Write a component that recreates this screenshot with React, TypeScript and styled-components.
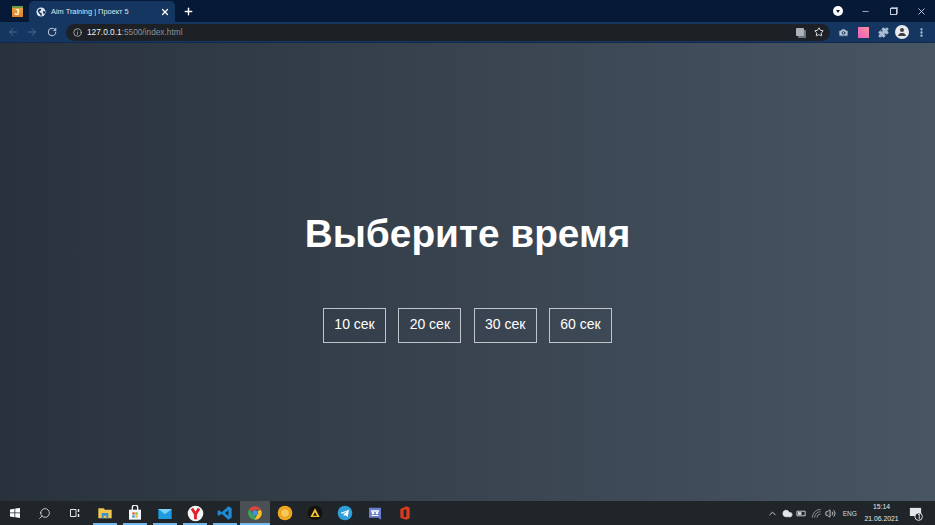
import { ReactNode } from 'react';
import styled, { createGlobalStyle } from 'styled-components';
import {
  ArrowLeft,
  ArrowRight,
  RotateCw,
  Info,
  Star,
  Camera,
  Puzzle,
  X,
  Plus,
  Minus,
  EllipsisVertical,
  ChevronUp,
  Cloud,
  Volume2,
  Search,
} from 'lucide-react';

const GlobalStyle = createGlobalStyle`
  html, body {
    margin: 0;
    padding: 0;
    overflow: hidden;
    background: #29323c;
  }
`;

const Screen = styled.div`
  width: 935px;
  height: 525px;
  display: flex;
  flex-direction: column;
  font-family: 'Liberation Sans', Arial, sans-serif;
  overflow: hidden;
`;

const TabStrip = styled.div`
  height: 22px;
  flex: none;
  display: flex;
  align-items: flex-end;
  background: #061a38;
  color: #fff;
`;

const AppBadge = styled.div`
  width: 29px;
  height: 21px;
  flex: none;
  display: flex;
  align-items: center;
  justify-content: center;
`;

const BadgeLetter = styled.div`
  width: 11px;
  height: 11px;
  margin-left: 5px;
  background: linear-gradient(180deg, #6e9a45 0, #6e9a45 18%, #e8a23a 18%, #dc7f2e 100%);
  color: #fff;
  font-size: 9px;
  font-weight: 700;
  line-height: 12px;
  text-align: center;
`;

const Tab = styled.div`
  width: 146px;
  height: 21px;
  flex: none;
  display: flex;
  align-items: center;
  gap: 5px;
  padding: 0 5px 0 7px;
  box-sizing: border-box;
  background: #153660;
  border-radius: 5px 5px 0 0;
  font-size: 7.4px;
  color: #dfe6ef;
`;

const TabTitle = styled.span`
  flex: 1;
  white-space: nowrap;
`;

const NewTab = styled.div`
  width: 26px;
  height: 21px;
  flex: none;
  display: flex;
  align-items: center;
  justify-content: center;
`;

const StripSpacer = styled.div`
  flex: 1;
`;

const ProfileDot = styled.div`
  width: 10px;
  height: 10px;
  margin: 0 8px 6px 0;
  border-radius: 50%;
  background: #fff;
  display: flex;
  align-items: center;
  justify-content: center;
  &::after {
    content: '';
    border-left: 2.5px solid transparent;
    border-right: 2.5px solid transparent;
    border-top: 3px solid #061a38;
  }
`;

const WindowButton = styled.div`
  width: 28px;
  height: 20px;
  margin-bottom: 1px;
  display: flex;
  align-items: center;
  justify-content: center;
  color: #c8d0da;
`;

const RestoreIcon = styled.div`
  width: 5px;
  height: 5px;
  border: 1px solid #c8d0da;
  box-shadow: 1px -1px 0 0 #8a94a3;
`;

const Toolbar = styled.div`
  height: 21px;
  flex: none;
  display: flex;
  align-items: center;
  background: #153660;
  border-bottom: 1px solid #0f2a4d;
  box-sizing: border-box;
  padding-left: 6px;
`;

const NavButton = styled.div<{ $dim?: boolean }>`
  width: 13px;
  margin-right: 6.5px;
  display: flex;
  justify-content: center;
  color: ${({ $dim }) => ($dim ? '#4d6a8e' : '#c4d0de')};
`;

const AddressBar = styled.div`
  width: 764px;
  height: 17px;
  margin-left: 1.5px;
  flex: none;
  display: flex;
  align-items: center;
  gap: 5px;
  padding: 0 6px 0 7px;
  box-sizing: border-box;
  border-radius: 9px;
  background: #1d2126;
  color: #c6cbd2;
`;

const Url = styled.div`
  flex: 1;
  font-size: 8.3px;
  color: #8b9199;
  white-space: nowrap;
`;

const Host = styled.span`
  color: #eef0f2;
`;

const TranslateIcon = styled.div`
  width: 8px;
  height: 8px;
  margin-right: 5px;
  background: #aab2bb;
  border-radius: 1px;
  box-shadow: 2px 2px 0 #6f7780;
`;

const Extensions = styled.div`
  flex: 1;
  display: flex;
  align-items: center;
  gap: 7px;
  padding: 0 7.5px;
  color: #b4c2d2;
`;

const GradientExt = styled.div`
  width: 11px;
  height: 11px;
  margin: 0 1.5px 0 2.5px;
  background: linear-gradient(45deg, #e95fc0, #fb8f9a);
`;

const Avatar = styled.div`
  width: 14px;
  height: 14px;
  margin-left: -0.5px;
  border-radius: 50%;
  background: #e8eaed;
  display: flex;
  align-items: center;
  justify-content: center;
`;

const Page = styled.main`
  flex: 1;
  min-height: 0;
  display: flex;
  flex-direction: column;
  align-items: center;
  padding-top: 166px;
  box-sizing: border-box;
  background: linear-gradient(90deg, #29323c, #485563);
  color: #fff;
`;

const Title = styled.h1`
  margin: 0 0 49px;
  font-size: 38.8px;
  line-height: 50px;
  font-weight: 700;
`;

const TimeList = styled.ul`
  list-style: none;
  margin: 0;
  padding: 0;
  display: flex;
  gap: 12.3px;
`;

const TimeButton = styled.li`
  width: 63px;
  height: 35px;
  padding-bottom: 3px;
  box-sizing: border-box;
  border: 1px solid #c0c5ca;
  display: flex;
  align-items: center;
  justify-content: center;
  font-size: 14px;
  color: #fff;
`;

const Taskbar = styled.footer`
  height: 24px;
  flex: none;
  display: flex;
  align-items: center;
  background: #1f2528;
  color: #e4e6e8;
`;

const TaskSlot = styled.div<{ $running?: boolean; $active?: boolean }>`
  width: 30px;
  height: 24px;
  flex: none;
  position: relative;
  display: flex;
  align-items: center;
  justify-content: center;
  background: ${({ $active }) => ($active ? '#4a5053' : 'transparent')};
  ${({ $running, $active }) =>
    $running &&
    `&::after {
      content: '';
      position: absolute;
      left: ${$active ? 0 : 3}px;
      right: ${$active ? 0 : 3}px;
      bottom: 0;
      height: 2px;
      background: #76b9ed;
    }`}
`;

const Tray = styled.div`
  margin-left: auto;
  display: flex;
  align-items: center;
  gap: 3.5px;
  padding-right: 11px;
  color: #d5d8da;
`;

const Lang = styled.span`
  font-size: 6.6px;
  margin-left: 3px;
`;

const Clock = styled.div`
  width: 42px;
  text-align: center;
  font-size: 6.8px;
  line-height: 12px;
  color: #e7e9ea;
`;

const NotifyBox = styled.div`
  width: 18px;
  display: flex;
  justify-content: center;
`;

const Icon = ({ size = 14, children }: { size?: number; children: ReactNode }) => (
  <svg width={size} height={size} viewBox="0 0 24 24">
    {children}
  </svg>
);

export default function App() {
  return (
    <Screen>
      <GlobalStyle />
      <TabStrip>
        <AppBadge>
          <BadgeLetter>J</BadgeLetter>
        </AppBadge>
        <Tab>
          <Icon size={10}>
            <circle cx="12" cy="12" r="11" fill="#dfe6ef" />
            <path d="M4 8l5-4 4 1-2 4-3 1 2 4h3l1 5-2 3-3-5-3-3zM17 9l4 1 1 4-3 4-2-4z" fill="#153660" />
          </Icon>
          <TabTitle>Aim Training | Проект 5</TabTitle>
          <X size={10} strokeWidth={3} color="#fff" />
        </Tab>
        <NewTab>
          <Plus size={11} strokeWidth={3} />
        </NewTab>
        <StripSpacer />
        <ProfileDot />
        <WindowButton>
          <Minus size={9} />
        </WindowButton>
        <WindowButton>
          <RestoreIcon />
        </WindowButton>
        <WindowButton>
          <X size={11} />
        </WindowButton>
      </TabStrip>

      <Toolbar>
        <NavButton $dim>
          <ArrowLeft size={12} />
        </NavButton>
        <NavButton $dim>
          <ArrowRight size={12} />
        </NavButton>
        <NavButton>
          <RotateCw size={10} strokeWidth={2.4} />
        </NavButton>
        <AddressBar>
          <Info size={9} />
          <Url>
            <Host>127.0.0.1</Host>:5500/index.html
          </Url>
          <TranslateIcon />
          <Star size={10} strokeWidth={2.4} color="#e0e3e6" />
        </AddressBar>
        <Extensions>
          <Camera size={11} fill="#b4c2d2" color="#153660" />
          <GradientExt />
          <Puzzle size={11} fill="#a9bdd3" color="#a9bdd3" />
          <Avatar>
            <Icon size={12}>
              <circle cx="12" cy="8" r="4" fill="#3c4043" />
              <path d="M4 20c1-5 5-6 8-6s7 1 8 6z" fill="#3c4043" />
            </Icon>
          </Avatar>
          <EllipsisVertical size={11} strokeWidth={3} color="#c4d0de" />
        </Extensions>
      </Toolbar>

      <Page>
        <Title>Выберите время</Title>
        <TimeList>
          {[10, 20, 30, 60].map((time) => (
            <TimeButton key={time}>{time} сек</TimeButton>
          ))}
        </TimeList>
      </Page>

      <Taskbar>
        <TaskSlot>
          <Icon size={12}>
            <path d="M2 5l9-1.500V11H2zM12.500 3.200L22 2v9h-9.500zM2 12.500h9v8L2 19zM12.500 12.500H22V22l-9.500-1.300z" fill="#fff" />
          </Icon>
        </TaskSlot>
        <TaskSlot>
          <Search size={13} strokeWidth={1.5} color="#e4e6e8" style={{ transform: 'scaleX(-1)', marginLeft: -2 }} />
        </TaskSlot>
        <TaskSlot>
          <Icon size={12}>
            <path d="M3 5h11v14H3z" fill="none" stroke="#e4e6e8" strokeWidth="2" />
            <path d="M19 4v6M19 14v6" fill="none" stroke="#e4e6e8" strokeWidth="3" />
          </Icon>
        </TaskSlot>
        <TaskSlot $running>
          <Icon size={16}>
            <path d="M2 5h8l2 2h10v13H2z" fill="#f3c64f" />
            <path d="M7 12h10v8h-3v-4h-4v4H7z" fill="#3d93c9" />
          </Icon>
        </TaskSlot>
        <TaskSlot $running>
          <Icon size={16}>
            <path d="M3 7h18v15H3z" fill="#f4f6f8" />
            <path d="M8 8V4a4 4 0 018 0v4" fill="none" stroke="#f4f6f8" strokeWidth="2" />
            <path d="M8 11h3.500v3.500H8z" fill="#e8562a" />
            <path d="M12.500 11H16v3.500h-3.500z" fill="#7fba2a" />
            <path d="M8 15.500h3.500V19H8z" fill="#2a9be8" />
            <path d="M12.500 15.500H16V19h-3.500z" fill="#f5b91f" />
          </Icon>
        </TaskSlot>
        <TaskSlot $running>
          <Icon size={16}>
            <path d="M2 6h20v15H2z" fill="#1f9ae0" />
            <path d="M2 6h20l-10 8z" fill="#7cd0f7" />
          </Icon>
        </TaskSlot>
        <TaskSlot $running>
          <Icon size={17}>
            <circle cx="12" cy="12" r="11" fill="#f5f5f5" />
            <path d="M7 5l5 8 5-8M12 12v8" fill="none" stroke="#e0202c" strokeWidth="4" />
          </Icon>
        </TaskSlot>
        <TaskSlot $running>
          <Icon size={16}>
            <path d="M17 2l5 3v14l-5 3-10-9-4 3-2-1V9l2-1 4 3zM17 8l-5 4 5 4z" fill="#1f8ad2" />
          </Icon>
        </TaskSlot>
        <TaskSlot $running $active>
          <Icon size={16}>
            <path d="M12 2a10 10 0 018.700 5H12a5 5 0 00-4.600 3L3.700 6A10 10 0 0112 2z" fill="#e0443a" />
            <path d="M20.700 7A10 10 0 0111 22l4.300-7.400A5 5 0 0016 9z" fill="#f5c02c" />
            <path d="M3.700 6L8 13.500a5 5 0 005 3.400L11 22A10 10 0 013.700 6z" fill="#3ba655" />
            <circle cx="12" cy="12" r="4" fill="#4a90e2" />
          </Icon>
        </TaskSlot>
        <TaskSlot>
          <Icon size={16}>
            <circle cx="12" cy="12" r="11" fill="#f2a81c" />
            <circle cx="12" cy="12" r="6.500" fill="#f8c95a" stroke="#d98f12" />
          </Icon>
        </TaskSlot>
        <TaskSlot>
          <Icon size={16}>
            <circle cx="12" cy="12" r="11" fill="#14120c" />
            <path d="M12 5l7 13H5zM12 11l-3 5h6z" fill="#f2c230" fillRule="evenodd" />
          </Icon>
        </TaskSlot>
        <TaskSlot>
          <Icon size={16}>
            <circle cx="12" cy="12" r="11" fill="#2f9fd9" />
            <path d="M5 12l13-5-2 11-4-3-2 2v-3l6-5-8 4z" fill="#fff" />
          </Icon>
        </TaskSlot>
        <TaskSlot>
          <Icon size={16}>
            <path d="M3 4h18v18l-4-3H3z" fill="#6b7fd0" />
            <circle cx="9" cy="12" r="2" fill="#fff" />
            <circle cx="15" cy="12" r="2" fill="#fff" />
            <path d="M6 8h12v2H6zM7 15h10v1.500H7z" fill="#fff" />
          </Icon>
        </TaskSlot>
        <TaskSlot>
          <Icon size={16}>
            <path d="M5 6l9-4 5 2v16l-5 2-9-3z" fill="#d83b20" />
            <path d="M10 7h4v11h-4z" fill="#1f2528" />
          </Icon>
        </TaskSlot>

        <Tray>
          <ChevronUp size={11} />
          <Cloud size={11} fill="#e4e6e8" />
          <Icon size={11}>
            <path d="M2 7h18v10H2z" fill="none" stroke="#d5d8da" strokeWidth="2" />
            <path d="M4 9h8v6H4z" fill="#d5d8da" />
          </Icon>
          <Icon size={11}>
            <path d="M3 21A18 18 0 0121 3M8 21A13 13 0 0121 8M13 21a8 8 0 018-8" fill="none" stroke="#8f9598" strokeWidth="2" />
          </Icon>
          <Volume2 size={11} />
          <Lang>ENG</Lang>
          <Clock>
            15:14
            <br />
            21.06.2021
          </Clock>
          <NotifyBox>
            <Icon size={15}>
              <path d="M3 3h18v13H3z" fill="#e4e6e8" />
              <circle cx="17" cy="17" r="6" fill="#1f2528" stroke="#e4e6e8" strokeWidth="1.500" />
              <path d="M16 14l2-1v8" fill="none" stroke="#e4e6e8" strokeWidth="1.500" />
            </Icon>
          </NotifyBox>
        </Tray>
      </Taskbar>
    </Screen>
  );
}
